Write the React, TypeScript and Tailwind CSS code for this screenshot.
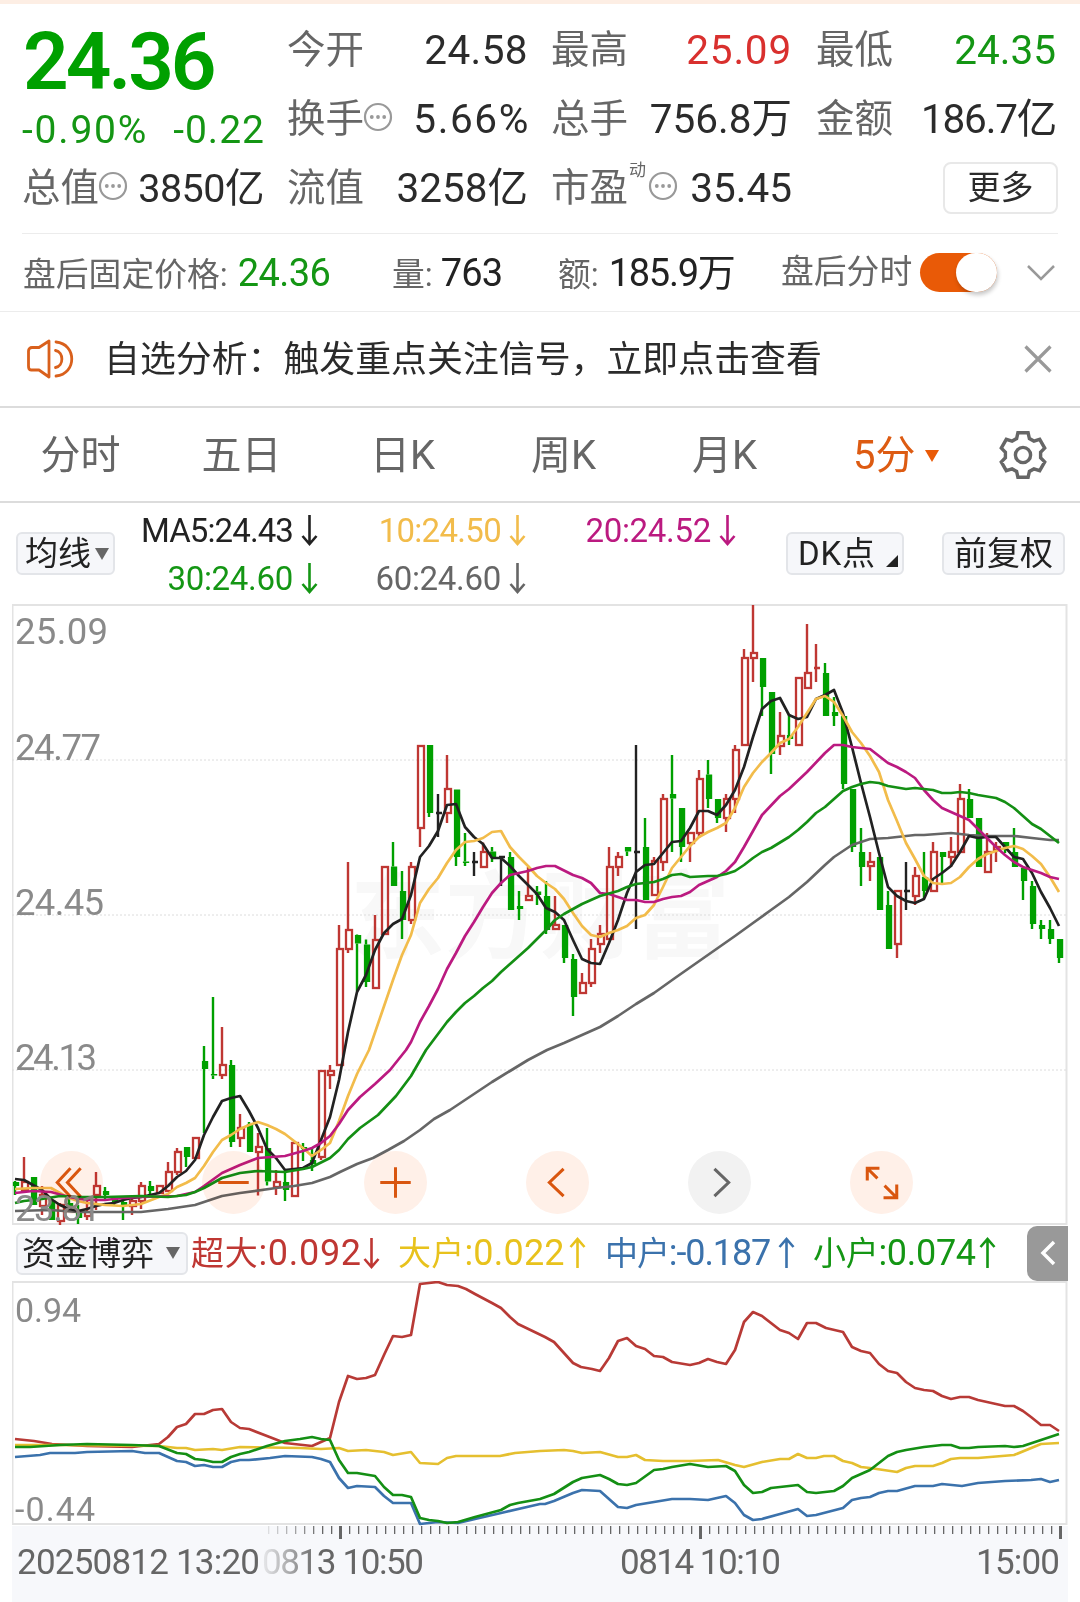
import { Fragment, type ReactNode } from 'react';
import clsx from 'clsx';

type Kind = 'u' | 'd' | 'e';
// kind, high, body top, body bottom, low
type Candle = [Kind, number, number, number, number];

const STEP = 9;
const FIRST_X = 15;

const candles: Candle[] = [
  ['d', 1181, 1182, 1186, 1195],
  ['u', 1157, 1182, 1190, 1192],
  ['d', 1177, 1177, 1205, 1205],
  ['u', 1186, 1195, 1206, 1215],
  ['d', 1197, 1200, 1220, 1220],
  ['u', 1203, 1205, 1221, 1225],
  ['d', 1198, 1203, 1208, 1210],
  ['d', 1205, 1211, 1218, 1224],
  ['u', 1200, 1212, 1216, 1220],
  ['u', 1172, 1186, 1195, 1210],
  ['d', 1187, 1191, 1195, 1200],
  ['d', 1196, 1199, 1203, 1205],
  ['d', 1200, 1202, 1206, 1220],
  ['u', 1198, 1201, 1206, 1215],
  ['u', 1182, 1186, 1201, 1209],
  ['d', 1181, 1186, 1191, 1195],
  ['u', 1186, 1186, 1193, 1193],
  ['u', 1162, 1172, 1191, 1191],
  ['u', 1148, 1152, 1172, 1175],
  ['d', 1147, 1147, 1157, 1167],
  ['u', 1138, 1138, 1158, 1158],
  ['d', 1046, 1061, 1069, 1133],
  ['d', 997, 1074, 1075.5, 1079],
  ['u', 1027, 1065, 1075, 1079],
  ['d', 1060, 1065, 1142, 1147],
  ['u', 1114, 1128, 1138, 1147],
  ['d', 1122, 1124, 1152, 1152],
  ['u', 1133, 1147, 1152, 1195.5],
  ['d', 1128, 1148, 1181.5, 1185.5],
  ['u', 1170, 1182, 1187, 1195],
  ['d', 1170, 1182, 1190, 1201],
  ['u', 1143, 1143, 1196, 1196],
  ['d', 1143, 1147, 1149, 1161],
  ['d', 1148, 1160, 1164, 1171],
  ['u', 1071, 1071, 1157, 1160],
  ['u', 1065, 1071, 1075, 1089],
  ['u', 925, 949, 1065, 1065],
  ['u', 862, 930, 949, 953],
  ['d', 934.5, 935, 943.5, 991],
  ['d', 939.5, 944.5, 982, 987],
  ['u', 915, 940, 988, 988],
  ['u', 867, 867, 934, 934],
  ['d', 842, 866.5, 886, 886],
  ['d', 871, 891, 920, 939],
  ['u', 862, 867, 920, 924],
  ['u', 746, 746, 828, 847],
  ['d', 745, 745, 813, 817],
  ['e', 794, 813, 813, 837],
  ['u', 755, 789, 813, 823],
  ['d', 789.5, 789.5, 857, 866],
  ['d', 833, 861.5, 863, 866],
  ['e', 852, 862, 862, 876],
  ['u', 842.5, 852, 867, 867],
  ['d', 847, 851.5, 857.5, 862],
  ['e', 857, 857, 857, 886],
  ['d', 852, 857, 910, 910],
  ['d', 891, 906, 909, 920],
  ['u', 867, 896, 900, 900],
  ['d', 886, 891.5, 895, 905],
  ['d', 881, 896, 930, 934],
  ['u', 896, 925, 929, 929],
  ['d', 925, 925, 958, 963],
  ['d', 954, 959, 997, 1016],
  ['u', 973, 983, 993, 993],
  ['u', 939, 949, 983, 987],
  ['u', 925, 934, 944, 953],
  ['u', 847, 867, 939, 939],
  ['u', 852, 857, 867, 876],
  ['d', 847, 847, 851.5, 856],
  ['e', 745, 852, 852, 929],
  ['d', 818, 847, 900, 900],
  ['u', 857, 861, 895, 895],
  ['u', 794, 799, 862, 871],
  ['d', 755, 794, 798.5, 852],
  ['d', 808, 808, 847, 862],
  ['u', 833, 833, 843, 862],
  ['u', 770, 779, 833, 838],
  ['d', 760, 774.5, 799, 808],
  ['d', 799, 799, 818, 823],
  ['u', 794, 799, 818, 832],
  ['u', 745, 750, 799, 813],
  ['u', 649, 658, 745, 745],
  ['u', 605, 653, 658, 682],
  ['d', 658, 658, 687, 716],
  ['d', 692, 692, 754, 774],
  ['u', 712, 736, 746, 755],
  ['d', 714, 735, 739, 745],
  ['u', 678, 678, 745, 745],
  ['u', 624, 673, 688, 688],
  ['u', 644, 668, 668, 682],
  ['d', 663, 673, 716, 716],
  ['d', 697, 712, 716, 726],
  ['d', 716, 716, 784, 789],
  ['d', 789, 789, 847, 852],
  ['d', 828, 852, 867, 886],
  ['u', 852, 862, 866, 881],
  ['d', 857, 857, 910, 910],
  ['d', 891, 905, 949, 949],
  ['u', 891, 891, 944, 958],
  ['e', 862, 891, 891, 910],
  ['u', 867, 876, 896, 905],
  ['d', 852, 877, 891, 898],
  ['u', 842, 852, 891, 891],
  ['d', 852, 852, 857, 883],
  ['u', 837, 852, 857, 867],
  ['u', 784, 799, 852, 852],
  ['d', 789, 799, 818, 818],
  ['d', 818, 818, 867, 867],
  ['u', 833, 852, 872, 872],
  ['u', 842, 847, 850, 862],
  ['d', 842, 842, 847, 853],
  ['d', 828, 852, 867, 867],
  ['d', 868, 868, 881, 900],
  ['d', 881, 886, 924, 929],
  ['d', 920, 925, 929, 939],
  ['d', 920, 929, 939, 944],
  ['d', 939, 939, 958, 963],
];

const averages = [
  {
    name: 'MA60',
    color: '#666666',
    points:
      '15,1211 50,1210 78,1212 141,1212 168,1209 195,1205 222,1196 240,1193 276,1188 294,1186 312,1183 330,1177 340,1172 357,1164 373,1158 388,1150 404,1141 420,1130 434,1119 450,1110 465,1100 492,1082 510,1071 528,1060 547,1050 564,1043 582,1035 600,1027 618,1016 636,1004 654,993 675,978 695,964 715,950 735,936 753,923 771,910 789,897 807,882 825,865 834,857 852,845 861,842 870,839 888,838 915,835 924,835 951,833 969,835 987,836 1014,836 1032,838 1050,840 1059,840',
  },
  {
    name: 'MA5',
    color: '#222222',
    points:
      '15,1179 24,1180 33,1185 42,1190 51,1199 60,1205 69,1209 78,1211 87,1209 96,1206 105,1204 114,1203 123,1200 132,1198 141,1197 150,1195 159,1193 168,1186 177,1177 186,1171 195,1160 204,1135 213,1117 222,1101 231,1098 240,1096 249,1111 258,1128 267,1149 276,1158 285,1170 294,1169 303,1168 312,1163 321,1140 330,1117 339,1080 348,1032 357,992 366,975 375,950 384,933 393,924 402,919 411,895 420,857 429,846 438,831 447,805 456,804 465,827 474,837 483,844 492,858 501,858 510,866 519,876 528,885 537,894 546,908 555,912 564,920 573,940 582,959 591,963 600,964 609,943 618,920 627,893 636,872 645,865 654,864 663,853 672,842 681,841 690,828 699,811 708,811 717,815 726,805 735,790 744,767 753,737 762,709 771,701 780,698 789,715 798,719 807,717 816,699 825,695 834,690 843,713 852,747 861,783 870,817 879,853 888,887 897,896 906,901 915,903 924,899 933,879 942,873 951,866 960,852 969,836 978,838 987,837 996,837 1005,847 1014,857 1023,859 1032,873 1041,892 1050,908 1059,926',
  },
  {
    name: 'MA10',
    color: '#f2bc4b',
    points:
      '15,1189 33,1188 51,1188 60,1193 69,1198 78,1201 87,1203 105,1205 123,1206 141,1204 159,1197 168,1194 177,1187 186,1183 195,1178 204,1166 213,1152 222,1140 231,1135 240,1129 249,1125 258,1122 267,1125 276,1129 285,1134 294,1141 303,1148 312,1156 321,1150 330,1143 339,1121 348,1096 357,1074 369,1050 381,1015 393,980 402,955 411,935 420,903 429,889 438,878 447,863 456,850 465,842 474,841 483,838 492,832 501,831 510,847 519,857 528,866 537,876 546,883 555,889 564,899 573,913 582,926 591,935 600,937 609,933 618,930 627,926 636,918 645,915 654,905 663,887 672,868 681,857 690,846 699,837 708,832 717,828 726,823 735,808 744,787 753,773 762,762 771,753 780,743 789,739 798,727 807,713 816,699 825,696 834,702 843,716 852,732 861,743 870,756 879,772 888,800 897,821 906,843 915,859 924,876 933,883 942,884 951,883 960,877 969,867 978,859 987,854 996,851 1005,848 1014,846 1023,849 1032,856 1041,864 1050,877 1059,892',
  },
  {
    name: 'MA20',
    color: '#bb1a80',
    points:
      '15,1193 33,1191 51,1192 69,1197 87,1200 105,1200 123,1198 141,1197 177,1196 195,1192 204,1186 222,1173 240,1165 258,1158 285,1156 303,1151 312,1148 321,1143 330,1136 339,1124 348,1110 360,1097 375,1084 390,1070 406,1050 411,1042 420,1022 429,1006 438,989 447,969 456,953 465,936 474,922 483,907 492,893 501,883 510,875 519,873 528,871 537,868 546,866 555,866 573,875 582,878 591,883 600,893 609,894 618,897 627,900 636,900 645,902 654,902 663,899 672,897 681,896 690,892 699,885 708,881 717,877 726,871 735,862 744,847 753,831 762,815 780,796 789,789 807,772 825,753 834,745 843,745 852,747 870,749 879,756 888,763 897,767 906,772 915,778 924,790 933,800 942,808 951,812 960,816 969,820 978,829 987,838 996,847 1005,855 1014,862 1023,867 1032,870 1041,873 1050,877 1059,879',
  },
  {
    name: 'MA30',
    color: '#148f14',
    points:
      '15,1203 24,1201 42,1199 60,1196 78,1197 105,1197 141,1196 168,1197 186,1195 195,1192 204,1188 222,1178 240,1173 258,1171 285,1172 303,1169 312,1167 330,1158 339,1150 348,1139 360,1128 378,1115 396,1096 411,1076 426,1050 447,1022 456,1012 465,1003 474,996 483,988 492,981 501,972 510,964 528,948 537,939 546,930 555,920 564,914 582,904 600,896 618,891 627,887 636,884 654,882 663,879 672,875 681,874 690,877 708,876 717,876 726,874 735,871 744,865 753,858 762,852 771,848 789,837 798,830 807,822 816,813 825,807 843,791 852,787 861,784 870,782 879,783 888,786 906,789 915,788 933,790 942,793 951,793 960,792 969,793 978,795 996,798 1005,802 1014,808 1023,816 1032,824 1041,829 1050,836 1059,843',
  },
];

const flows = [
  {
    name: 'super',
    color: '#b83a36',
    points:
      '15,1439 34,1441 52,1444 87,1446 132,1447 159,1444 168,1437 177,1427 186,1424 195,1414 204,1414 213,1410 222,1409 231,1422 240,1428 249,1429 267,1436 285,1443 312,1446 321,1442 330,1438 339,1402 348,1376 357,1379 366,1378 375,1375 384,1355 393,1336 402,1337 411,1335 420,1284 438,1282 447,1285 458,1286 466,1289 475,1294 492,1303 501,1308 510,1317 518,1324 545,1337 554,1342 573,1363 581,1367 592,1369 600,1371 609,1358 618,1341 627,1338 636,1346 645,1349 654,1356 663,1357 672,1362 690,1365 699,1363 708,1359 717,1362 726,1364 735,1350 744,1322 753,1312 762,1316 780,1330 789,1333 798,1339 807,1323 816,1323 826,1328 843,1332 852,1347 861,1351 870,1353 879,1364 888,1371 897,1373 906,1382 915,1388 924,1390 933,1391 942,1396 951,1399 960,1397 969,1397 978,1400 1005,1406 1014,1406 1023,1411 1031,1417 1041,1425 1050,1425 1059,1431',
  },
  {
    name: 'large',
    color: '#e5bf2f',
    points:
      '15,1445 60,1445 159,1446 177,1448 186,1448 195,1450 213,1449 222,1450 240,1447 300,1448 321,1449 339,1448 348,1451 366,1450 384,1452 393,1455 411,1452 420,1463 438,1464 447,1458 456,1456 500,1456 515,1453 540,1451 564,1450 573,1451 582,1453 600,1452 618,1457 627,1457 636,1455 645,1460 663,1461 690,1461 718,1460 735,1465 744,1467 762,1462 780,1459 789,1459 798,1454 807,1458 816,1458 824,1456 834,1456 843,1461 852,1463 861,1467 870,1468 897,1472 906,1468 915,1466 933,1466 942,1463 951,1459 960,1458 978,1458 1014,1455 1041,1444 1059,1443',
  },
  {
    name: 'medium',
    color: '#3b72ac',
    points:
      '15,1457 40,1455 50,1453 75,1453 87,1452 132,1451 145,1453 159,1453 177,1461 186,1462 195,1466 204,1465 213,1467 222,1467 231,1462 240,1460 249,1460 270,1458 285,1456 312,1457 321,1459 330,1462 339,1478 348,1488 357,1486 375,1487 384,1496 393,1503 411,1503 420,1524 438,1522 458,1523 475,1519 501,1513 540,1504 545,1504 554,1501 573,1493 582,1490 600,1491 609,1499 618,1507 627,1508 636,1505 654,1502 672,1499 690,1499 708,1500 726,1496 735,1503 744,1515 753,1520 762,1519 780,1514 798,1509 807,1516 816,1515 843,1508 852,1500 861,1498 870,1497 879,1493 888,1491 897,1491 915,1486 933,1486 942,1484 962,1486 978,1483 1005,1481 1031,1480 1041,1479 1050,1482 1059,1480',
  },
  {
    name: 'small',
    color: '#148f14',
    points:
      '15,1447 30,1447 60,1445 87,1444 132,1445 159,1446 177,1453 186,1454 195,1459 204,1460 213,1462 222,1462 231,1457 240,1454 249,1452 267,1446 285,1441 300,1439 312,1437 321,1439 330,1440 339,1460 348,1473 357,1473 375,1476 384,1487 393,1495 402,1495 411,1497 420,1518 429,1520 438,1521 447,1523 458,1522 475,1517 501,1510 510,1505 518,1503 540,1499 554,1494 573,1482 582,1478 600,1475 609,1479 618,1484 627,1485 636,1483 654,1470 663,1469 672,1467 690,1464 708,1467 726,1466 735,1471 744,1485 753,1493 762,1492 771,1488 789,1486 798,1485 807,1492 816,1493 834,1491 843,1486 852,1478 861,1474 870,1470 888,1456 897,1452 906,1450 924,1447 942,1445 951,1445 960,1448 969,1448 978,1447 1005,1446 1014,1447 1023,1446 1041,1440 1059,1434',
  },
];

const priceLabels = [
  { text: '25.09', y: 644, width: 93 },
  { text: '24.77', y: 760, width: 86 },
  { text: '24.45', y: 915, width: 89 },
  { text: '24.13', y: 1070, width: 82 },
  { text: '23.81', y: 1221, width: 86 },
];

function InfoDots() {
  return (
    <svg className="-mt-[5px] -ml-px h-[30px] w-[30px] shrink-0" viewBox="0 0 30 30" fill="none">
      <circle cx="15" cy="15" r="13" stroke="#999" strokeWidth="2.2" />
      <circle cx="8.8" cy="15" r="1.9" fill="#999" />
      <circle cx="15" cy="15" r="1.9" fill="#999" />
      <circle cx="21.2" cy="15" r="1.9" fill="#999" />
    </svg>
  );
}

function Arrow({ up }: { up?: boolean }) {
  return (
    <svg
      className={clsx('h-8 w-[17px] shrink-0', up && 'rotate-180')}
      viewBox="0 0 17 32"
      fill="none"
      stroke="currentColor"
      strokeWidth="2.6"
    >
      <path d="M8.5 1V30M1.5 22L8.5 30L15.5 22" />
    </svg>
  );
}

function Quote({
  label,
  extra,
  className,
  children,
}: {
  label: string;
  extra?: ReactNode;
  className?: string;
  children: ReactNode;
}) {
  return (
    <div className="flex h-[69px] items-center justify-between whitespace-nowrap leading-none">
      <span className="flex items-center text-[38.5px] text-[#666]">
        {label}
        {extra}
      </span>
      <span className={clsx('text-[40.5px]', className ?? 'text-[#2b2b2b]')}>
        {children}
      </span>
    </div>
  );
}

function QuoteHeader() {
  return (
    <section className="grid grid-cols-[265px_264px_265px_1fr] pt-3 pr-[24px] pb-2.5 pl-[22px]">
      <div className="w-[242px]">
        <div className="flex h-[138px] flex-col whitespace-nowrap leading-none text-[#00a000]">
          <div className="pt-[6px] pl-px text-[80px] font-semibold tracking-[-3px]">
            24.36
          </div>
          <div className="mt-[9px] -mr-px flex justify-between text-[39px] text-[#149614]">
            <span className="tracking-[1.8px]">-0.90%</span>
            <span className="tracking-[1px]">-0.22</span>
          </div>
        </div>
        <Quote label="总值" extra={<InfoDots />}>
          <span className="text-[39.5px] tracking-[-0.5px]">3850亿</span>
        </Quote>
      </div>
      <div className="w-[241px]">
        <Quote label="今开">
          <span className="tracking-[0.4px]">24.58</span>
        </Quote>
        <Quote label="换手" extra={<InfoDots />}>
          <span className="-mr-[2px] tracking-[1.6px]">5.66%</span>
        </Quote>
        <Quote label="流值">3258亿</Quote>
      </div>
      <div className="w-[241px]">
        <Quote label="最高" className="text-[#d9302e]">
          <span className="tracking-[0.8px]">25.09</span>
        </Quote>
        <Quote label="总手">756.8万</Quote>
        <Quote
          label="市盈"
          extra={
            <>
              <span className="mb-9 ml-px text-[17px]">动</span>
              <span className="ml-[3px]">
                <InfoDots />
              </span>
            </>
          }
        >
          35.45
        </Quote>
      </div>
      <div>
        <Quote label="最低" className="text-[#149614]">
          24.35
        </Quote>
        <Quote label="金额">
          <span className="tracking-[-1.2px]">186.7亿</span>
        </Quote>
        <div className="flex h-[67px] items-center justify-end">
          <button className="-mr-[2px] flex h-[52px] w-[115px] items-center justify-center rounded-lg border-2 border-[#e8e8e8] text-[33px] leading-none text-[#2b2b2b]">
            更多
          </button>
        </div>
      </div>
    </section>
  );
}

function AfterHours() {
  return (
    <section className="flex h-[78px] items-center whitespace-nowrap border-b border-[#ececec] pl-[23px] text-[32.800px] leading-none text-[#666]">
      <div className="w-[369px]">
        盘后固定价格:
        <span className="ml-2.5 text-[38px] tracking-[-0.6px] text-[#149614]">24.36</span>
      </div>
      <div className="w-[166px]">
        量:<span className="ml-2 text-[38px] tracking-[-0.8px] text-[#222]">763</span>
      </div>
      <div className="w-[223px]">
        额:<span className="ml-2.5 text-[38px] tracking-[-1.300px] text-[#222]">185.9万</span>
      </div>
      <div className="w-[139px]">盘后分时</div>
      <div className="flex h-[39px] w-[77px] justify-end rounded-full bg-[#e95a07]">
        <span className="h-[39px] w-[41px] rounded-full bg-white shadow-[1px_3px_4px_rgba(0,0,0,0.22)]" />
      </div>
      <svg className="ml-[29px] h-[18px] w-[30px]" viewBox="0 0 30 18" fill="none" stroke="#999" strokeWidth="2.5">
        <path d="M2 2L15 15L28 2" />
      </svg>
    </section>
  );
}

function Notice() {
  return (
    <section className="flex h-24 items-center border-b-2 border-[#dcdcdc] pl-[27px] text-[#2b2b2b]">
      <svg
        className="h-10 w-[48px]"
        viewBox="0 0 48 40"
        fill="none"
        stroke="#d9601c"
        strokeWidth="2.8"
        strokeLinejoin="round"
        strokeLinecap="round"
      >
        <path d="M22 2V38L12 31H4C2 31 1.5 29 1.5 27V12C1.5 10 3 8.5 5 8.5H12Z" />
        <path d="M28.500 11.500C37 13 37 27 28.500 28.500" />
        <path d="M29 3C50 5 50 35 29 37" />
      </svg>
      <p className="ml-[29px] w-[919px] whitespace-nowrap pt-[3px] text-[35.900px] leading-none">
        自选分析：触发重点关注信号，立即点击查看
      </p>
      <svg className="h-[30px] w-[30px]" viewBox="0 0 30 30" stroke="#999" strokeWidth="3.2">
        <path d="M2.500 2.500L27.500 27.500M27.500 2.500L2.500 27.500" />
      </svg>
    </section>
  );
}

function Tabs() {
  return (
    <nav className="flex h-[95px] items-center border-b-2 border-[#dcdcdc] text-[40px] leading-none text-[#666]">
      {['分时', '五日', '日K', '周K', '月K'].map((tab) => (
        <span key={tab} className="w-[161px] pt-[3px] text-center">
          {tab}
        </span>
      ))}
      <span className="flex w-[193px] items-center pt-[3px] pl-[48px] text-[#dd5b12]">
        5分
        <svg className="ml-[10px] h-3 w-3.5" viewBox="0 0 14 12" fill="#e95a07">
          <path d="M0 0H14L7 12Z" />
        </svg>
      </span>
      <svg
        className="h-[50px] w-[50px]"
        viewBox="0 0 50 50"
        fill="none"
        stroke="#666"
        strokeWidth="3.400"
      >
        <path d="M19.900 2.800H30.100L31.400 8.600L35.900 11.100L41.700 9.300L46.700 18.100L42.600 22.300V27.700L46.700 31.900L41.700 40.700L35.900 38.900L31.400 41.400L30.100 47.200H19.900L18.600 41.400L14.100 38.900L8.300 40.700L3.300 31.900L7.400 27.700V22.300L3.300 18.100L8.300 9.300L14.100 11.100L18.600 8.600Z" />
        <circle cx="25" cy="25" r="7.600" />
      </svg>
    </nav>
  );
}

function Legend({ className, children }: { className: string; children: ReactNode }) {
  return (
    <span className={clsx('flex h-12 items-center justify-end', className)}>
      <span className="pt-px">{children}</span>
      <span className="ml-2 flex">
        <Arrow />
      </span>
    </span>
  );
}

const pill =
  'flex h-[43px] items-center rounded-md border-2 border-[#e3e5e9] bg-[#f6f7fa] text-[33px] text-[#222]';

function AverageBar() {
  return (
    <div className="flex h-[101px] items-center whitespace-nowrap pl-4 leading-none">
      <button className={clsx(pill, 'w-[99px] pl-[7px]')}>
        均线
        <svg className="ml-1 h-3 w-3.5 shrink-0" viewBox="0 0 14 12" fill="#666">
          <path d="M0 0H14L7 12Z" />
        </svg>
      </button>
      <div className="grid grid-cols-[203px_208px_210px] text-[33px] tracking-[-0.3px]">
        <Legend className="tracking-[-0.9px] text-[#222]">MA5:24.43</Legend>
        <Legend className="tracking-[-0.7px] text-[#f2bc4b]">10:24.50</Legend>
        <Legend className="text-[#bb1a80]">20:24.52</Legend>
        <Legend className="text-[#149614]">30:24.60</Legend>
        <Legend className="text-[#666]">60:24.60</Legend>
      </div>
      <button className={clsx(pill, 'relative ml-[50px] w-[118px] pl-[10px]')}>
        <span className="tracking-[0.8px]">DK点</span>
        <svg className="absolute right-1 bottom-1.5 h-3 w-3" viewBox="0 0 12 12" fill="#222">
          <path d="M12 0V12H0Z" />
        </svg>
      </button>
      <button className={clsx(pill, 'ml-[38px] w-[123px] justify-center')}>前复权</button>
    </div>
  );
}

const controls = [
  { id: 'rewind', path: 'M30 17L17 31L30 45M40 17L27 31L40 45' },
  { id: 'zoom-out', path: 'M16 31H46' },
  { id: 'zoom-in', path: 'M16 31H46M31 16V46' },
  { id: 'prev', path: 'M37 17.500L23 31L37 44.500' },
  { id: 'next', path: 'M26 17.500L40 31L26 44.500', muted: true },
  {
    id: 'expand',
    path: 'M17 29V17H29M17 17L27 27M34 34L45 45M33 46H46V33',
  },
];

function Controls() {
  return (
    <div className="absolute bottom-[11px] left-[28px] flex gap-[99px] mix-blend-multiply">
      {controls.map((c) => (
        <svg
          key={c.id}
          className={clsx('h-[63px] w-[63px] rounded-full', c.muted ? 'bg-[#f2f2f2]' : 'bg-[#fff0e8]')}
          viewBox="0 0 62 62"
          fill="none"
          stroke={c.muted ? '#666' : '#d9560f'}
          strokeWidth="3"
        >
          <path d={c.path} />
        </svg>
      ))}
    </div>
  );
}

const candleColor = { u: '#bf3733', d: '#00a000', e: '#222222' };

function CandleMark({ candle, index }: { candle: Candle; index: number }) {
  const [kind, high, top, bottom, low] = candle;
  const x = FIRST_X + index * STEP;
  const color = candleColor[kind];
  if (top === bottom) {
    return (
      <path
        d={`M${x} ${high}V${low}M${x - 2} ${top}H${x + 4}`}
        stroke={color}
        strokeWidth="2.4"
      />
    );
  }
  return (
    <Fragment>
      <path d={`M${x} ${high}V${top}M${x} ${bottom}V${low}`} stroke={color} strokeWidth="2.4" />
      {kind === 'u' ? (
        <rect x={x - 2} y={top} width="6" height={bottom - top} fill="none" stroke={color} strokeWidth="2.3" />
      ) : (
        <rect x={x - 2.1} y={top} width="6.3" height={bottom - top} fill={color} />
      )}
    </Fragment>
  );
}

function PriceChart() {
  return (
    <div className="relative ml-3 h-[621px] w-[1056px]">
      <svg className="block h-full w-full" viewBox="12 604 1056 621" fill="none">
        <text
          x="350"
          y="951"
          fontSize="95"
          fontWeight="700"
          fill="#f8f8f8"
          textLength="380"
        >
          东方财富
        </text>
        <rect x="12.500" y="605" width="1054" height="619" stroke="#e3e3e3" strokeWidth="2" />
        {[760, 915, 1070].map((y) => (
          <path key={y} d={`M12 ${y}H1067`} stroke="#dcdcdc" strokeDasharray="2 2" />
        ))}
        {candles.map((candle, i) => (
          <CandleMark key={i} candle={candle} index={i} />
        ))}
        {averages.map((line) => (
          <polyline
            key={line.name}
            points={line.points}
            stroke={line.color}
            strokeWidth="2.700"
            strokeLinejoin="round"
          />
        ))}
        {priceLabels.map((label) => (
          <text
            key={label.text}
            x="15"
            y={label.y}
            fontSize="36.500"
            fill="#8a8a8a"
            textLength={label.width}
          >
            {label.text}
          </text>
        ))}
      </svg>
      <Controls />
    </div>
  );
}

function Flow({
  className,
  label,
  value,
  up,
}: {
  className: string;
  label: string;
  value: string;
  up?: boolean;
}) {
  return (
    <span className={clsx('flex items-center text-[36px]', className)}>
      <span className="text-[33px]">{label}</span>
      <span className="grow">:{value}</span>
      <Arrow up={up} />
    </span>
  );
}

function FlowBar() {
  return (
    <div className="flex h-[56px] items-center whitespace-nowrap pl-4 leading-none">
      <button className={clsx(pill, 'w-[172px] pl-[4px]')}>
        资金博弈
        <svg className="ml-3 h-3 w-3.5" viewBox="0 0 14 12" fill="#666">
          <path d="M0 0H14L7 12Z" />
        </svg>
      </button>
      <Flow className="ml-[3px] w-[189px] tracking-[0.7px] text-[#bf3733]" label="超大" value="0.092" />
      <Flow className="ml-[18px] w-[188px] tracking-[0.2px] text-[#e8c21c]" label="大户" value="0.022" up />
      <Flow className="ml-[19px] w-[190px] tracking-[-1.1px] text-[#3b72ac]" label="中户" value="-0.187" up />
      <Flow className="ml-[18px] w-[183px] tracking-[-0.3px] text-[#149614]" label="小户" value="0.074" up />
      <button className="ml-[31px] flex h-[55px] w-[41px] items-center justify-center rounded-l-[10px] bg-[#999]">
        <svg className="h-[26px] w-4" viewBox="0 0 16 26" fill="none" stroke="#fff" strokeWidth="3.500">
          <path d="M14 2L3 13L14 24" />
        </svg>
      </button>
    </div>
  );
}

function FlowChart() {
  return (
    <svg className="ml-3 block h-[245px] w-[1056px]" viewBox="12 1281 1056 245" fill="none">
      <rect x="12.500" y="1282" width="1054" height="242" stroke="#e3e3e3" strokeWidth="2" />
      {flows.map((line) => (
        <polyline
          key={line.name}
          points={line.points}
          stroke={line.color}
          strokeWidth="2.700"
          strokeLinejoin="round"
        />
      ))}
      <text x="15" y="1322" fontSize="34" fill="#8a8a8a" textLength="66">
        0.94
      </text>
      <text x="15" y="1521" fontSize="34" fill="#8a8a8a" textLength="80">
        -0.44
      </text>
    </svg>
  );
}

const ticks = Array.from({ length: 89 }, (_, i) => 268 + i * STEP);

function TimeAxis() {
  return (
    <div className="ml-3 h-[76px] w-[1056px] bg-[#f7f8fb]">
      <svg className="block h-[76px] w-full" viewBox="12 1526 1056 76" fill="#666" fontSize="35">
        <defs>
          <linearGradient id="fade" gradientUnits="userSpaceOnUse" x1="262" y1="0" x2="318" y2="0">
            <stop offset="0" stopColor="#666" stopOpacity="0.1" />
            <stop offset="1" stopColor="#666" />
          </linearGradient>
        </defs>
        {ticks.map((x) => {
          const major = (x - 340) % 360 === 0;
          return (
            <rect
              key={x}
              x={major ? x - 1 : x}
              y="1526"
              width={major ? 3 : 1.3}
              height={major ? 13 : 8}
              opacity={x < 322 ? (x - 256) / 66 : 1}
            />
          );
        })}
        <text x="17" y="1574" textLength="243">
          20250812 13:20
        </text>
        <text x="262" y="1574" textLength="162" fill="url(#fade)">
          0813 10:50
        </text>
        <text x="620" y="1574" textLength="161">
          0814 10:10
        </text>
        <text x="976" y="1574" textLength="84">
          15:00
        </text>
      </svg>
    </div>
  );
}

export default function App() {
  return (
    <main className="h-[1602px] w-[1080px] overflow-hidden bg-white font-['Roboto','Noto_Sans_CJK_SC',sans-serif]">
      <div className="h-1 bg-[#fdeee4]" />
      <QuoteHeader />
      <div className="mx-[22px] h-px bg-[#ececec]" />
      <AfterHours />
      <Notice />
      <Tabs />
      <AverageBar />
      <PriceChart />
      <FlowBar />
      <FlowChart />
      <TimeAxis />
    </main>
  );
}
